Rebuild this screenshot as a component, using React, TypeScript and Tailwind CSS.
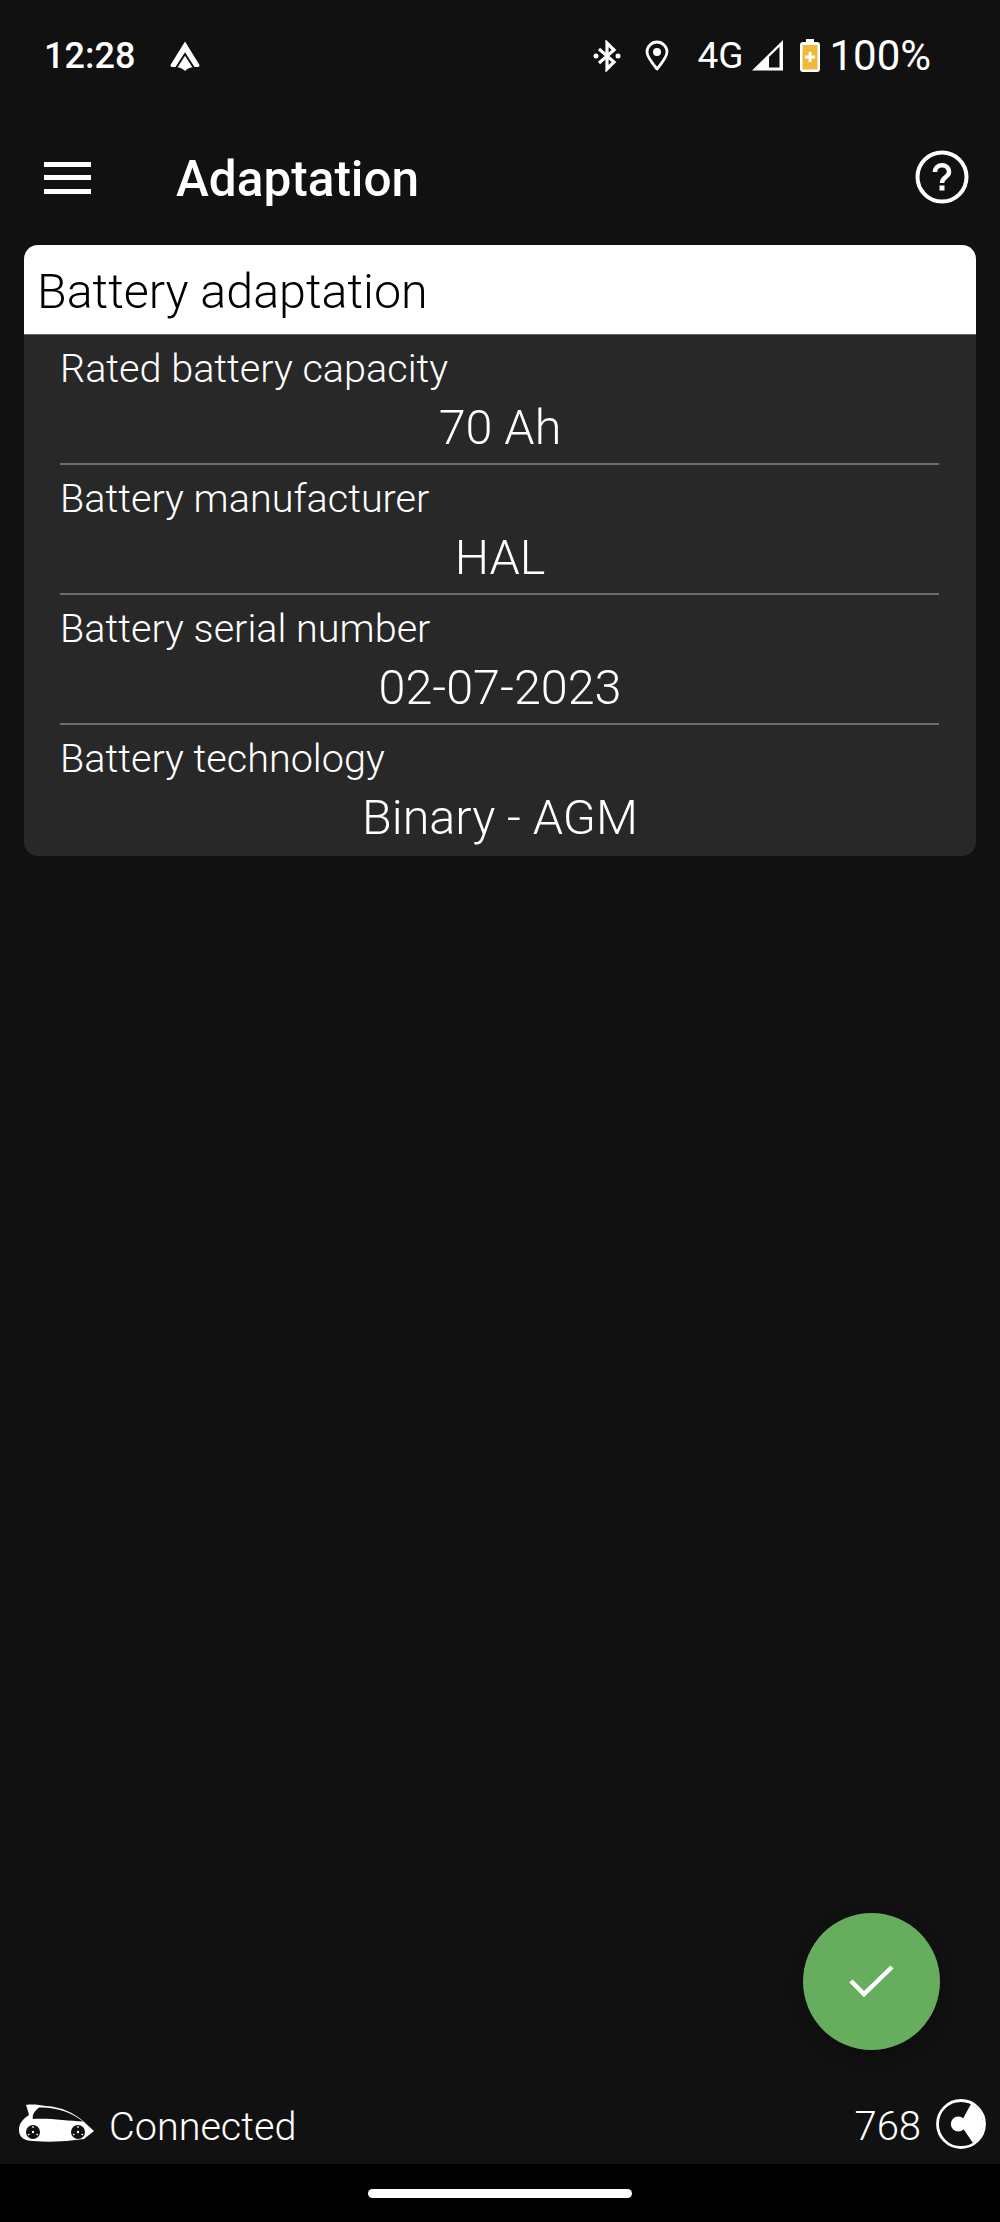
const rows = [
  { label: 'Rated battery capacity', value: '70 Ah' },
  { label: 'Battery manufacturer', value: 'HAL' },
  { label: 'Battery serial number', value: '02-07-2023' },
  { label: 'Battery technology', value: 'Binary - AGM' },
];

function AutoIcon() {
  return (
    <svg width="30" height="30" viewBox="0 0 30 30" className="ml-[35px]" fill="none">
      <path d="M15 0.500 L29.500 24 Q30 26.500 27 26 L24 26 Q18 26.500 15 30 Q12 26.500 6 26 L3 26 Q0 26.500 0.500 24 Z" fill="#fff" />
      <path d="M6 27 L15 13 L24 27" stroke="#111" strokeWidth="2" />
    </svg>
  );
}

function BluetoothIcon() {
  return (
    <svg width="28" height="32" viewBox="0 0 28 32" fill="none">
      <path d="M6 9 L21 22 L14 29 V3 L21 10 L6 23" stroke="#fff" strokeWidth="3.200" />
      <circle cx="3" cy="16" r="2.500" fill="#fff" />
      <circle cx="25" cy="16" r="2.500" fill="#fff" />
    </svg>
  );
}

function PinIcon() {
  return (
    <svg width="24" height="32" viewBox="0 0 24 32" fill="none">
      <path d="M12 29 C7 23 2 17 2 12 A10 10 0 0 1 22 12 C22 17 17 23 12 29 Z" stroke="#fff" strokeWidth="2.800" strokeLinejoin="round" />
      <circle cx="12" cy="12" r="4" fill="#fff" />
    </svg>
  );
}

function SignalIcon() {
  return (
    <svg width="31" height="31" viewBox="0 0 31 31" fill="none">
      <path d="M0 30.500 L31 0 V30.500 Z" fill="#fff" />
      <path d="M17 17 L27.500 6.800 V27.500 H17 Z" fill="#111" />
    </svg>
  );
}

function BatteryIcon() {
  return (
    <svg width="20" height="33" viewBox="0 0 20 33" fill="none">
      <path d="M6 0 H14 V3 H17 Q20 3 20 6 V30 Q20 33 17 33 H3 Q0 33 0 30 V6 Q0 3 3 3 H6 Z" fill="#fff" />
      <rect x="2.500" y="6" width="15" height="24.500" fill="#f0b93a" />
      <path d="M10 13 V23 M5 18 H15" stroke="#fff" strokeWidth="2.800" />
    </svg>
  );
}

function HelpIcon() {
  return (
    <svg width="54" height="54" viewBox="0 0 54 54" fill="none">
      <circle cx="27" cy="27" r="24.500" stroke="#fff" strokeWidth="4" />
      <path d="M20 22 C20 13 34 13 34 22 C34 27 27 27 27 33" stroke="#fff" strokeWidth="4.500" />
      <rect x="24.500" y="35.500" width="5" height="5" fill="#fff" />
    </svg>
  );
}

function CarIcon() {
  return (
    <svg width="76" height="40" viewBox="0 0 76 40" fill="none">
      <path d="M8 1 C14 0 22 1 28 2 C44 3 56 9 65 17 L76 27 L66 35 Q40 39 15 37 C6 37 1 33 1 26 C1 19 5 15 11 11 C10 7 9 4 8 1 Z" fill="#fff" />
      <path d="M21 3.500 C15 8 14 13 15 15 C32 14 50 17 65 17.500 C54 8.500 38 3 21 3.500 Z" fill="#111" />
      <circle cx="15" cy="28" r="7" fill="#111" />
      <circle cx="60" cy="28" r="7" fill="#111" />
      <circle cx="15" cy="28" r="1.200" fill="#fff" />
      <circle cx="60" cy="28" r="1.200" fill="#fff" />
      <path d="M15 22 V24 M10 31 L11.500 30 M20 31 L18.500 30 M60 22 V24 M55 31 L56.500 30 M65 31 L63.500 30" stroke="#fff" strokeWidth="1.200" />
    </svg>
  );
}

function LinkLogo() {
  return (
    <svg width="50" height="50" viewBox="0 0 50 50" fill="none">
      <circle cx="25" cy="25" r="23.500" stroke="#fff" strokeWidth="2.800" />
      <path d="M35 5 A22.500 22.500 0 0 1 37 44 L24 25 Z" fill="#fff" />
      <circle cx="22.300" cy="25" r="7.500" fill="#fff" />
    </svg>
  );
}

export default function App() {
  return (
    <div className="relative flex h-[2222px] w-[1000px] flex-col overflow-hidden bg-[#111111] font-['Roboto',sans-serif] text-white">
      <header className="flex h-[110px] items-center pl-[44px] pr-[45px] pt-[1px]">
        <span className="text-[36px] leading-none font-medium">12:28</span>
        <AutoIcon />
        <div className="ml-auto mr-[24px] flex items-center">
          <BluetoothIcon />
          <div className="ml-[24px]"><PinIcon /></div>
          <span className="ml-[28px] text-[37px] leading-none">4G</span>
          <div className="ml-[9px]"><SignalIcon /></div>
          <div className="ml-[17px]"><BatteryIcon /></div>
          <span className="ml-[9px] text-[42px] leading-none">100%</span>
        </div>
      </header>

      <nav className="flex h-[135px] items-center pl-[44px] pr-[31px]">
        <div className="flex h-[32px] w-[47px] flex-col justify-between">
          <div className="h-[5px] bg-white" />
          <div className="h-[5px] bg-white" />
          <div className="h-[5px] bg-white" />
        </div>
        <h1 className="ml-[85px] pt-[4px] text-[49.500px] leading-none font-medium">Adaptation</h1>
        <div className="ml-auto mb-[2px]"><HelpIcon /></div>
      </nav>

      <section className="mx-[24px] h-[611px] overflow-hidden rounded-[14px] bg-[#282828]">
        <div className="flex h-[89px] items-center bg-white pl-[13px] pt-[5px] text-[48.400px] leading-none font-light text-black">
          Battery adaptation
        </div>
        <div className="h-[1px] bg-[#666666]" />
        {rows.map((row, i) => (
          <div key={row.label} className="flex h-[130px] flex-col pl-[36px] pr-[37px]">
            <div className="pt-[10px] text-[39.600px] leading-[47px] font-light">{row.label}</div>
            <div className="pl-[1px] pt-[8px] text-center text-[48.500px] leading-[56px] font-light">{row.value}</div>
            {i < rows.length - 1 && <div className="mt-auto h-[2px] bg-[#6e6e6e]" />}
          </div>
        ))}
      </section>

      <footer className="mt-auto flex h-[83px] items-center justify-between pl-[18px] pr-[14px] pt-[3px]">
        <div className="flex items-center">
          <CarIcon />
          <span className="ml-[15px] pt-[6px] text-[39.600px] leading-none font-light">Connected</span>
        </div>
        <div className="flex items-center">
          <span className="pt-[6px] text-[40px] leading-none font-light">768</span>
          <div className="ml-[15px]"><LinkLogo /></div>
        </div>
      </footer>

      <div className="flex h-[58px] items-center justify-center bg-black">
        <div className="h-[9px] w-[264px] rounded-full bg-white" />
      </div>

      <button className="absolute left-[803px] top-[1913px] flex h-[137px] w-[137px] items-center justify-center rounded-full bg-[#66ad5e] shadow-[0_6px_16px_rgba(0,0,0,0.25)]">
        <svg width="46" height="34" viewBox="0 0 46 34" fill="none">
          <path d="M2 16 L15 29 L43 2" stroke="#fff" strokeWidth="4.500" />
        </svg>
      </button>
    </div>
  );
}
